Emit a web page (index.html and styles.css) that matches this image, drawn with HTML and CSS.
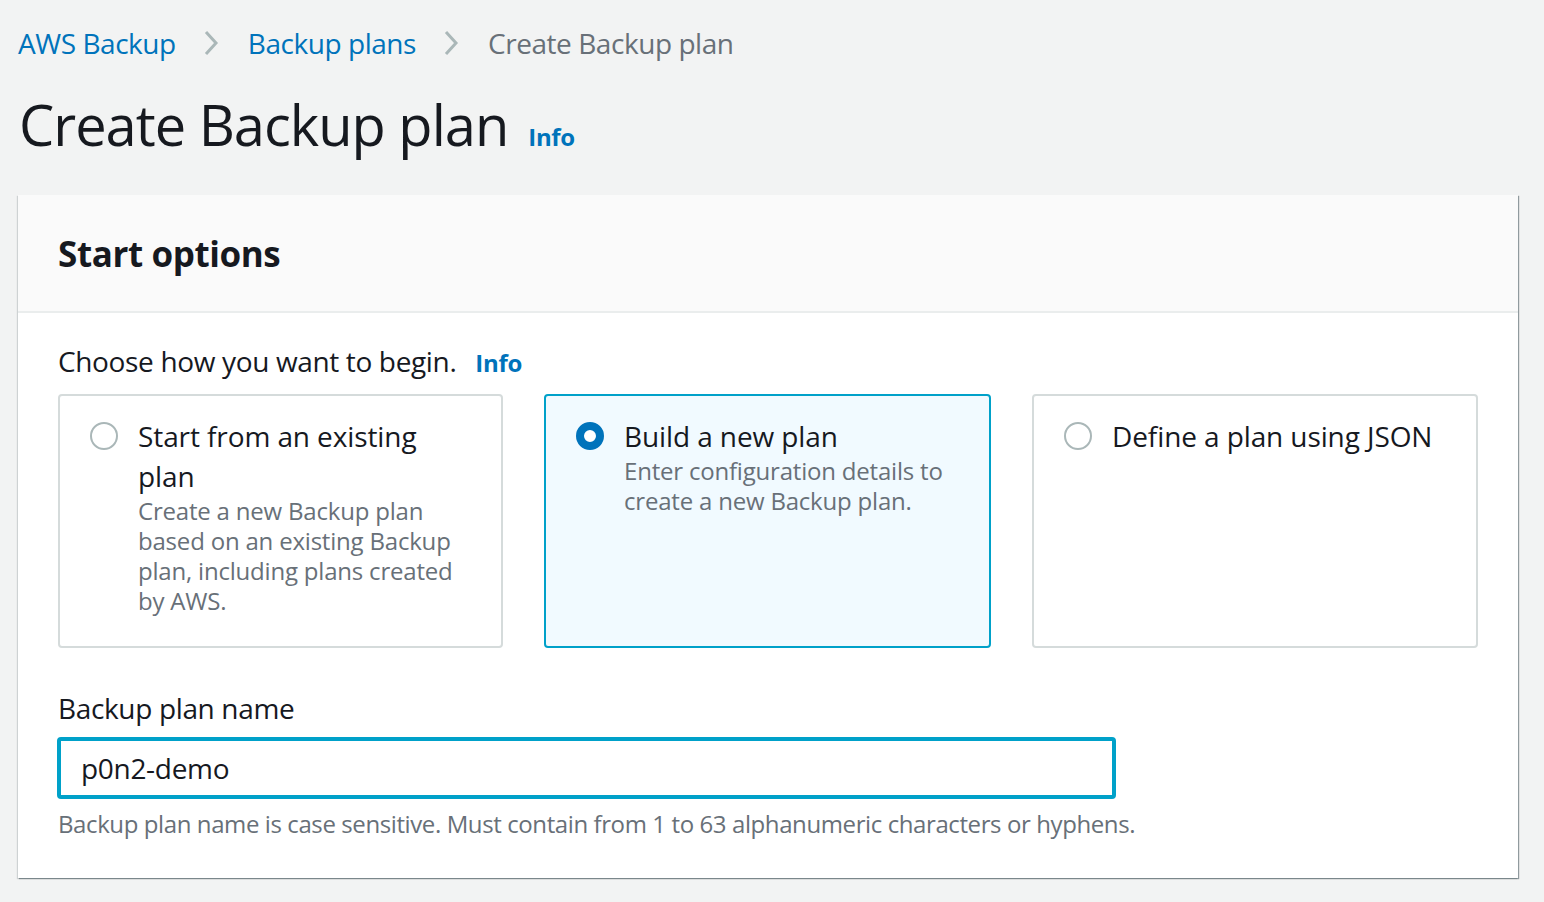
FILE: index.html
```html
<!DOCTYPE html>
<html>
<head>
<meta charset="utf-8">
<link rel="stylesheet" href="styles.css">
</head>
<body>
<div class="page">
  <nav class="breadcrumbs">
    <a class="crumb link">AWS Backup</a>
    <svg class="chev" width="16" height="28" viewBox="0 0 16 28"><path d="M3 3 L13 14 L3 25" fill="none" stroke="#aab7b8" stroke-width="3"/></svg>
    <a class="crumb link">Backup plans</a>
    <svg class="chev" width="16" height="28" viewBox="0 0 16 28"><path d="M3 3 L13 14 L3 25" fill="none" stroke="#aab7b8" stroke-width="3"/></svg>
    <span class="crumb current">Create Backup plan</span>
  </nav>
  <div class="title-row">
    <h1 class="title">Create Backup plan</h1>
    <a class="info info-title">Info</a>
  </div>
  <section class="container">
    <div class="container-header">
      <h2 class="container-title">Start options</h2>
    </div>
    <div class="container-body">
      <div class="prompt">Choose how you want to begin. <a class="info info-prompt">Info</a></div>
      <div class="tiles">
        <div class="tile">
          <span class="radio"></span>
          <div class="tile-text">
            <div class="tile-label">Start from an existing plan</div>
            <div class="tile-desc">Create a new Backup plan based on an existing Backup plan, including plans created by AWS.</div>
          </div>
        </div>
        <div class="tile selected">
          <span class="radio checked"></span>
          <div class="tile-text">
            <div class="tile-label">Build a new plan</div>
            <div class="tile-desc">Enter configuration details to create a new Backup plan.</div>
          </div>
        </div>
        <div class="tile">
          <span class="radio"></span>
          <div class="tile-text">
            <div class="tile-label">Define a plan using JSON</div>
          </div>
        </div>
      </div>
      <div class="field">
        <label class="field-label">Backup plan name</label>
        <div class="input">p0n2-demo</div>
        <div class="field-hint">Backup plan name is case sensitive. Must contain from 1 to 63 alphanumeric characters or hyphens.</div>
      </div>
    </div>
  </section>
</div>
</body>
</html>
```

FILE: styles.css
```css
* { box-sizing: border-box; }
html, body { margin: 0; padding: 0; }
body {
  background: #f2f3f3;
  font-family: "Open Sans", "Noto Sans", sans-serif;
  color: #16191f;
  width: 1544px;
  height: 902px;
  overflow: hidden;
}
.page { padding: 22px 26px 0 18px; }
.breadcrumbs {
  display: flex;
  align-items: center;
  height: 42px;
  font-size: 28px;
  letter-spacing: -0.45px;
}
.crumb { white-space: nowrap; }
.link { color: #0073bb; }
.current { color: #687078; }
.chev { margin: 0 29px 0 27px; }
.title-row {
  display: flex;
  align-items: baseline;
  margin-top: 25px;
  height: 70px;
}
.title {
  margin: 0 0 0 1px;
  font-size: 56px;
  font-weight: 400;
  line-height: 70px;
  letter-spacing: -1px;
}
.info {
  color: #0073bb;
  font-weight: 700;
  font-size: 24px;
  letter-spacing: -0.3px;
}
.info-title { margin-left: 20px; }
.container {
  margin-top: 36px;
  width: 1500px;
  background: #fff;
  box-shadow: 1px 1px 1px 0 rgba(0, 28, 36, 0.3), 1px 1px 1px 0 rgba(0, 28, 36, 0.15), -1px 1px 1px 0 rgba(0, 28, 36, 0.15);
}
.container-header {
  background: #fafafa;
  border-bottom: 2px solid #eaeded;
  height: 118px;
  padding: 0 40px;
  display: flex;
  align-items: center;
}
.container-title {
  margin: 0;
  font-size: 35px;
  font-weight: 700;
  letter-spacing: -0.4px;
}
.container-body { padding: 26px 40px 37px 40px; }
.prompt {
  font-size: 28px;
  line-height: 44px;
  letter-spacing: -0.35px;
}
.info-prompt { margin-left: 12px; }
.tiles {
  display: grid;
  grid-template-columns: 445px 447px 446px;
  column-gap: 41px;
  margin-top: 9px;
}
.tile {
  height: 254px;
  border: 2px solid #d5dbdb;
  border-radius: 4px;
  padding: 20px 30px 20px 30px;
  display: flex;
  align-items: flex-start;
  gap: 20px;
}
.tile.selected {
  border-color: #00a1c9;
  background: #f1faff;
}
.tile-text { min-width: 0; flex: 1; }
.radio {
  flex: none;
  width: 28px;
  height: 28px;
  margin-top: 6px;
  border-radius: 50%;
  border: 2px solid #aab7b8;
  background: #fff;
}
.radio.checked {
  border: 8px solid #0073bb;
}
.tile-label {
  font-size: 28px;
  line-height: 40px;
  letter-spacing: -0.1px;
}
.tile-desc {
  font-size: 24px;
  line-height: 30px;
  color: #687078;
  letter-spacing: -0.2px;
}
.field { margin-top: 38px; }
.field-label {
  display: block;
  font-size: 28px;
  line-height: 44px;
  letter-spacing: -0.35px;
}
.input {
  margin-top: 7px;
  margin-left: -1px;
  width: 1059px;
  height: 62px;
  border: 4px solid #00a1c9;
  border-radius: 4px;
  padding: 0 20px;
  font-size: 28px;
  line-height: 54px;
  letter-spacing: -0.3px;
}
.field-hint {
  margin-top: 8px;
  font-size: 24px;
  line-height: 34px;
  color: #687078;
  letter-spacing: -0.4px;
}
```
